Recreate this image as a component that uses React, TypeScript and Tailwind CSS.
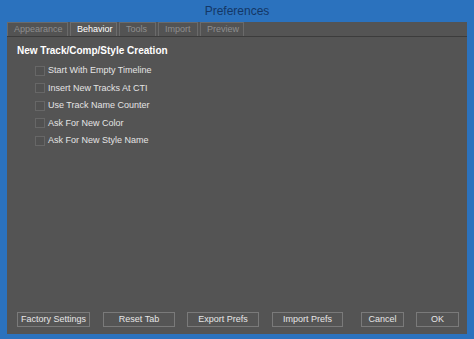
import React from "react";

const tabs = ["Appearance", "Behavior", "Tools", "Import", "Preview"];
const tabWidths = ["w-[61px]", "w-[47px]", "w-[37px]", "w-[40px]", "w-[44px]"];

const options = [
  "Start With Empty Timeline",
  "Insert New Tracks At CTI",
  "Use Track Name Counter",
  "Ask For New Color",
  "Ask For New Style Name",
];

const Btn = ({ label, w }: { label: string; w: string }) => (
  <div
    className={`${w} h-[15px] flex items-center justify-center border border-[#7a7a7a] bg-[#555555] text-[9px] text-[#e6e6e6] leading-none whitespace-nowrap`}
  >
    {label}
  </div>
);

export default function App() {
  return (
    <div
      className="w-[474px] h-[339px] bg-[#2b72be] flex flex-col px-[7px] pb-[5px]"
      style={{ fontFamily: "'Liberation Sans', Arial, sans-serif" }}
    >
      <div className="h-[22px] flex items-center justify-center text-[12px] text-[#143766]">
        Preferences
      </div>
      <div className="flex-1 bg-[#545454] flex flex-col">
        <div className="flex items-end gap-[2px] h-[15px] border-b border-[#3c3c3c]">
          {tabs.map((t, i) => (
            <div
              key={t}
              className={`${tabWidths[i]} h-[14px] flex items-center pl-[6px] text-[9px] leading-none border border-b-0 whitespace-nowrap ${
                i === 1
                  ? "border-[#6d6d6d] text-white bg-[#585858]"
                  : "border-[#6a6a6a] text-[#8e8e8e] bg-[#535353]"
              }`}
            >
              {t}
            </div>
          ))}
        </div>
        <div className="flex-1 flex flex-col pl-[10px] pt-[9px]">
          <div className="text-[10px] font-bold text-white leading-none whitespace-nowrap">
            New Track/Comp/Style Creation
          </div>
          <div className="flex flex-col gap-[6.5px] pl-[18px] pt-[9px]">
            {options.map((o) => (
              <div key={o} className="flex items-center gap-[3px] h-[11px]">
                <div className="w-[10px] h-[10px] border border-[#676767] bg-[#515151]" />
                <span className="text-[9px] text-[#e4e4e4] leading-none whitespace-nowrap">{o}</span>
              </div>
            ))}
          </div>
        </div>
        <div className="flex items-center pl-[10px] pr-[7px] pb-[7px]">
          <Btn label="Factory Settings" w="w-[73px]" />
          <div className="w-[13px]" />
          <Btn label="Reset Tab" w="w-[72px]" />
          <div className="w-[12px]" />
          <Btn label="Export Prefs" w="w-[72px]" />
          <div className="w-[13px]" />
          <Btn label="Import Prefs" w="w-[71px]" />
          <div className="w-[18px]" />
          <Btn label="Cancel" w="w-[43px]" />
          <div className="w-[12px]" />
          <Btn label="OK" w="w-[43px]" />
        </div>
      </div>
    </div>
  );
}
